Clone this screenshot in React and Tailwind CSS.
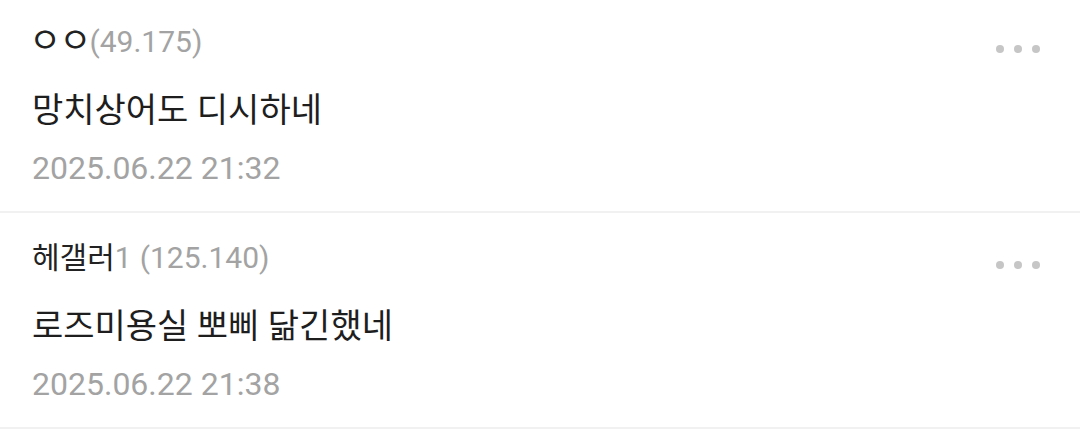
import React from "react";

const comments = [
  { name: "ㅇㅇ", jamo: true, nameTail: "", ip: "(49.175)", text: "망치상어도 디시하네", date: "2025.06.22 21:32" },
  { name: "헤갤러", jamo: false, nameTail: "1", ip: "(125.140)", text: "로즈미용실 뽀삐 닮긴했네", date: "2025.06.22 21:38" },
];

const font = { fontFamily: '"Roboto", "Noto Sans CJK KR", sans-serif' };

const Dots = () => (
  <div className="flex items-center gap-[10px] h-[40px] translate-y-[7px]">
    <span className="w-[8px] h-[8px] rounded-full bg-[#c6c6c6]" />
    <span className="w-[8px] h-[8px] rounded-full bg-[#c6c6c6]" />
    <span className="w-[8px] h-[8px] rounded-full bg-[#c6c6c6]" />
  </div>
);

const App = () => {
  return (
    <div className="w-[1080px] h-[439px] bg-white overflow-hidden" style={font}>
      <div className="-mt-[3px]">
        {comments.map((c, i) => (
          <div key={i} className="pl-[32px] pr-[40px] pt-[25px] pb-[23px] border-b-[2px] border-[#f1f1f1]">
            <div className="flex items-start justify-between h-[40px]">
              <p className="flex items-center h-[40px] leading-[40px] text-[30px] whitespace-nowrap">
                <span className={c.jamo ? "text-[#222222] text-[35px] -ml-[3px] tracking-[-2px]" : "text-[#222222]"}>{c.name}</span>
                <span className="text-[#a3a3a3]">{c.nameTail}</span>
                <span className={c.jamo ? "text-[#a3a3a3]" : "text-[#a3a3a3] ml-[8px]"}>{c.ip}</span>
              </p>
              <Dots />
            </div>
            <p className="mt-[28px] h-[40px] leading-[40px] text-[34px] text-[#1e1e1e] whitespace-nowrap">{c.text}</p>
            <p className="mt-[18px] h-[40px] leading-[40px] text-[32px] text-[#a3a3a3]">{c.date}</p>
          </div>
        ))}
      </div>
    </div>
  );
};

export default App;
